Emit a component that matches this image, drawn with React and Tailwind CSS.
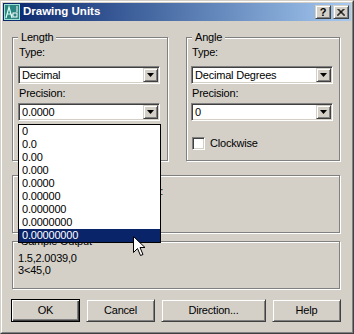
import React from "react";

const raised =
  "border border-t-[#d4d0c8] border-l-[#d4d0c8] border-b-[#404040] border-r-[#404040] shadow-[inset_1px_1px_0_#fff,inset_-1px_-1px_0_#808080] bg-[#d4d0c8]";
const sunken =
  "border border-t-[#808080] border-l-[#808080] border-b-white border-r-white shadow-[inset_1px_1px_0_#404040,inset_-1px_-1px_0_#d4d0c8] bg-white";
const etched =
  "border border-[#808080] shadow-[inset_1px_1px_0_#fff,1px_1px_0_#fff] m-0 min-w-0";

function Combo({ value }) {
  return (
    <div className={`flex h-[18px] w-[142px] items-stretch ${sunken}`}>
      <span className="flex-1 pl-[3px] leading-[16px]">{value}</span>
      <div className={`my-px mr-px flex w-[15px] items-center justify-center ${raised}`}>
        <svg width="7" height="4" viewBox="0 0 7 4">
          <polygon points="0,0 7,0 3.5,4" fill="#000" />
        </svg>
      </div>
    </div>
  );
}

function Label({ children }) {
  return <div className="h-[13px] pl-px leading-[13px]">{children}</div>;
}

function TitleIcon() {
  return (
    <svg width="16" height="16" viewBox="0 0 16 16">
      <rect x="0.5" y="0.5" width="15" height="15" fill="#2a8482" stroke="#9fe3d6" />
      <path d="M2 14 L5 3 L8 14 M3.3 10 H6.7" stroke="#d8fff4" strokeWidth="1.2" fill="none" />
      <rect x="9" y="9" width="4" height="4" fill="none" stroke="#fff" />
      <path d="M13 2 V8 M9 11 H7" stroke="#fff" />
    </svg>
  );
}

function Button({ children, width, isDefault }) {
  return (
    <div
      className={`flex h-[23px] items-center justify-center ${width} ${
        isDefault
          ? "border border-black shadow-[inset_1px_1px_0_#fff,inset_-1px_-1px_0_#404040,inset_-2px_-2px_0_#808080]"
          : raised
      }`}
    >
      {children}
    </div>
  );
}

const precisions = [
  "0",
  "0.0",
  "0.00",
  "0.000",
  "0.0000",
  "0.00000",
  "0.000000",
  "0.0000000",
  "0.00000000",
];

export default function App() {
  return (
    <div className="relative h-[334px] w-[354px] overflow-hidden border border-t-[#d4d0c8] border-l-[#d4d0c8] border-b-[#404040] border-r-[#404040] bg-[#d4d0c8] font-['Liberation_Sans',Arial,sans-serif] text-[11px] tracking-[-0.2px] text-black">
      <div className="flex h-full flex-col border border-t-white border-l-white border-b-[#808080] border-r-[#808080] p-px">
        {/* title bar */}
        <div className="flex h-[18px] items-center bg-linear-to-r from-[#0a246a] to-[#a6caf0] pl-px pr-[2px]">
          <TitleIcon />
          <span className="ml-[3px] flex-1 text-[11.5px] font-bold tracking-normal text-white">Drawing Units</span>
          <div className={`flex h-[14px] w-[16px] items-center justify-center text-[11px] font-bold leading-none ${raised}`}>
            ?
          </div>
          <div className={`ml-[2px] flex h-[14px] w-[16px] items-center justify-center ${raised}`}>
            <svg width="8" height="7" viewBox="0 0 8 7">
              <path d="M0.5 0 L7.5 7 M1.5 0 L8 6.5 M7.5 0 L0.5 7 M6.5 0 L0 6.5" stroke="#000" strokeWidth="1" />
            </svg>
          </div>
        </div>

        <div className="flex flex-col pl-[9px]">
          <div className="mt-[10px] flex gap-[18px]">
            <fieldset className={`w-[156px] px-[5px] pt-[2px] pb-[10px] ${etched}`}>
              <legend className="bg-[#d4d0c8] px-[3px] leading-[13px]">Length</legend>
              <Label>Type:</Label>
              <div className="mt-[7px]">
                <Combo value="Decimal" />
              </div>
              <div className="mt-[3px]">
                <Label>Precision:</Label>
              </div>
              <div className="mt-[3px]">
                <Combo value="0.0000" />
              </div>
            </fieldset>

            <fieldset className={`w-[154px] pl-[4px] pt-[2px] pb-[10px] ${etched}`}>
              <legend className="ml-[1px] bg-[#d4d0c8] px-[3px] leading-[13px]">Angle</legend>
              <Label>Type:</Label>
              <div className="mt-[7px]">
                <Combo value="Decimal Degrees" />
              </div>
              <div className="mt-[3px]">
                <Label>Precision:</Label>
              </div>
              <div className="mt-[3px]">
                <Combo value="0" />
              </div>
              <div className="mt-[16px] flex items-center pl-px">
                <div className={`h-[13px] w-[13px] ${sunken}`} />
                <span className="ml-[5px] leading-[13px]">Clockwise</span>
              </div>
            </fieldset>
          </div>

          <fieldset className={`mt-[8px] w-[328px] px-[5px] pt-[3px] pb-[14px] ${etched}`}>
            <legend className="bg-[#d4d0c8] px-[3px] leading-[13px]">Insertion scale</legend>
            <Label>Units to scale inserted content:</Label>
            <div className="mt-[2px]">
              <Combo value="Millimeters" />
            </div>
          </fieldset>

          <fieldset className={`mt-[2px] w-[328px] px-[5px] pt-[4px] pb-[12px] ${etched}`}>
            <legend className="bg-[#d4d0c8] px-[3px] leading-[13px]">Sample Output</legend>
            <div className="leading-[12px]">1.5,2.0039,0</div>
            <div className="leading-[12px]">3&lt;45,0</div>
          </fieldset>
        </div>

        <div className="mt-[10px] flex gap-[6px] pl-[8px]">
          <Button width="w-[69px]" isDefault>
            OK
          </Button>
          <Button width="w-[69px]">Cancel</Button>
          <Button width="w-[105px]">Direction...</Button>
          <Button width="w-[69px]">Help</Button>
        </div>
      </div>

      {/* open precision list */}
      <div className="absolute left-[17px] top-[123px] w-[143px] border border-black bg-white">
        {precisions.map((p, i) => (
          <div
            key={p}
            className={`h-[13px] pl-[3px] leading-[13px] ${
              i === precisions.length - 1 ? "bg-[#0a246a] text-white" : ""
            }`}
          >
            {p}
          </div>
        ))}
      </div>

      {/* mouse pointer */}
      <svg className="absolute left-[132px] top-[235px]" width="13" height="21" viewBox="0 0 13 21">
        <path
          d="M0.5 0.5 L0.5 16.5 L4.5 12.5 L7.5 19.5 L10 18.5 L7 11.5 L12 11.5 Z"
          fill="#fff"
          stroke="#000"
          strokeWidth="1"
          strokeLinejoin="miter"
        />
      </svg>
    </div>
  );
}
